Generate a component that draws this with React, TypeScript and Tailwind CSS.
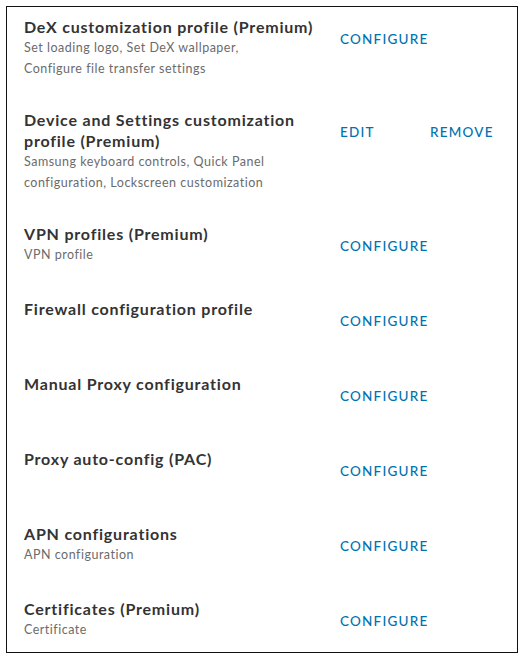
import React from "react";

type Profile = {
  title: string;
  desc?: string;
  actions: string[];
};

const PROFILES: Profile[] = [
  {
    title: "DeX customization profile (Premium)",
    desc: "Set loading logo, Set DeX wallpaper, Configure file transfer settings",
    actions: ["CONFIGURE"],
  },
  {
    title: "Device and Settings customization profile (Premium)",
    desc: "Samsung keyboard controls, Quick Panel configuration, Lockscreen customization",
    actions: ["EDIT", "REMOVE"],
  },
  { title: "VPN profiles (Premium)", desc: "VPN profile", actions: ["CONFIGURE"] },
  { title: "Firewall configuration profile", actions: ["CONFIGURE"] },
  { title: "Manual Proxy configuration", actions: ["CONFIGURE"] },
  { title: "Proxy auto-config (PAC)", actions: ["CONFIGURE"] },
  { title: "APN configurations", desc: "APN configuration", actions: ["CONFIGURE"] },
  { title: "Certificates (Premium)", desc: "Certificate", actions: ["CONFIGURE"] },
];

function ProfileRow({ profile }: { profile: Profile }) {
  return (
    <div className="flex items-start min-h-[45px]">
      <div className="w-[316px] shrink-0 pr-2">
        <h3 className="text-[16px] leading-[21px] font-bold tracking-[0.05em] text-[#333]">
          {profile.title}
        </h3>
        {profile.desc && (
          <p className="text-[12.5px] leading-[21px] tracking-[0.04em] text-[#6b6b6b] max-w-[250px]">
            {profile.desc}
          </p>
        )}
      </div>
      <div className="flex pt-[5px]">
        {profile.actions.map((a) => (
          <button
            key={a}
            type="button"
            className="w-[90px] text-left text-[13.5px] leading-[36px] tracking-[0.09em] text-[#0072b0] font-medium"
          >
            {a}
          </button>
        ))}
      </div>
    </div>
  );
}

export default function App() {
  return (
    <div className="w-[524px] h-[660px] bg-white p-[6px] font-['Lato','Noto_Sans',sans-serif]">
      <div className="h-[647px] border-[1.5px] border-[#111] pt-[9px] pl-[17px] flex flex-col gap-[30px]">
        {PROFILES.map((p) => (
          <ProfileRow key={p.title} profile={p} />
        ))}
      </div>
    </div>
  );
}
